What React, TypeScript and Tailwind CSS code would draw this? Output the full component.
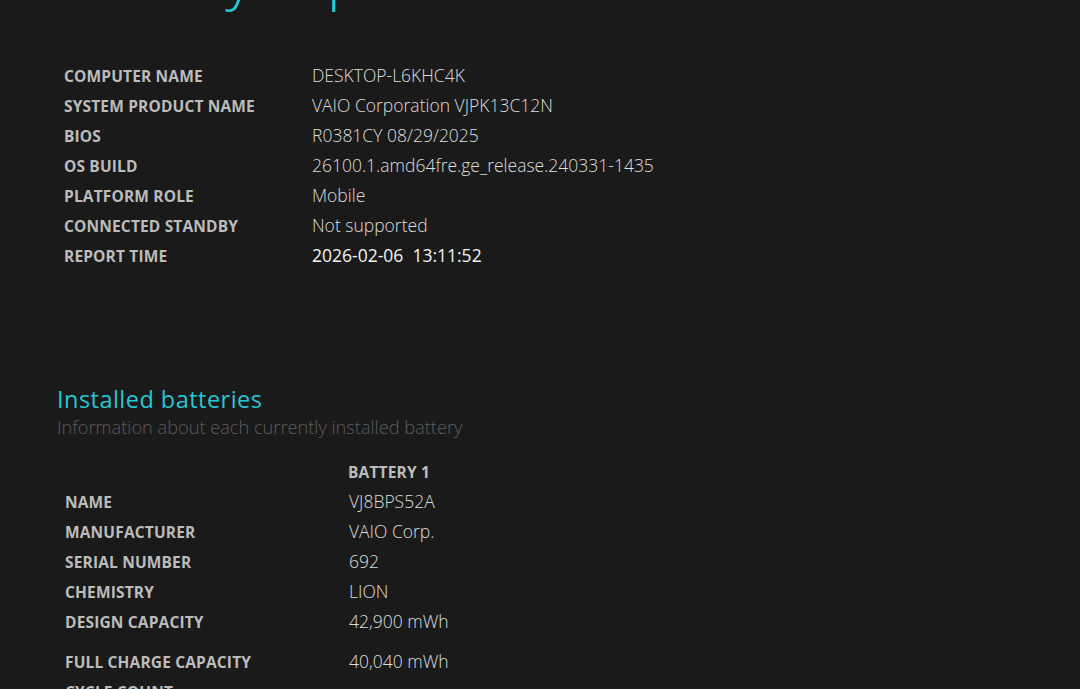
import React from 'react'

const systemInfo: [string, string][] = [
  ['Computer name', 'DESKTOP-L6KHC4K'],
  ['System product name', 'VAIO Corporation VJPK13C12N'],
  ['BIOS', 'R0381CY 08/29/2025'],
  ['OS build', '26100.1.amd64fre.ge_release.240331-1435'],
  ['Platform role', 'Mobile'],
  ['Connected standby', 'Not supported'],
]

const batteryInfo: [string, string][] = [
  ['Name', 'VJ8BPS52A'],
  ['Manufacturer', 'VAIO Corp.'],
  ['Serial number', '692'],
  ['Chemistry', 'LION'],
  ['Design capacity', '42,900 mWh'],
]

const font = { fontFamily: '"Open Sans", "Noto Sans", sans-serif' }

const Label = ({ children }: { children: React.ReactNode }) => (
  <div className="mt-[3px] whitespace-nowrap text-[15.5px] font-bold uppercase tracking-[0.01em] text-[#bcbcbc]">
    {children}
  </div>
)

const Value = ({
  children,
  strong,
}: {
  children: React.ReactNode
  strong?: boolean
}) => (
  <div
    className={
      strong
        ? 'whitespace-nowrap text-[17.5px] font-medium text-[#f2f2f2]'
        : 'whitespace-nowrap text-[17.5px] font-light text-[#dedede]'
    }
  >
    {children}
  </div>
)

const App = () => {
  return (
    <div
      className="h-[689px] w-[1080px] overflow-hidden bg-[#1a1a1a] pl-[57px]"
      style={font}
    >
      <h1 className="-mt-[55px] h-[60px] text-[61px] font-light leading-[60px] text-[#22c9d8]">
        Battery report
      </h1>

      <div className="ml-[7px] mt-[55px] flex flex-col">
        {systemInfo.map(([label, value]) => (
          <div key={label} className="flex h-[30px] items-center">
            <div className="w-[248px]">
              <Label>{label}</Label>
            </div>
            <Value>{value}</Value>
          </div>
        ))}
        <div className="flex h-[30px] items-center">
          <div className="w-[248px]">
            <Label>Report time</Label>
          </div>
          <Value strong>
            2026-02-06&nbsp;&nbsp;13:11:52
          </Value>
        </div>
      </div>

      <h2 className="mt-[115px] text-[23.5px] font-medium leading-[28px] tracking-[0.02em] text-[#27c6d3]">
        Installed batteries
      </h2>
      <p className="text-[18.2px] font-light leading-[28px] text-[#5c5c5c]">
        Information about each currently installed battery
      </p>

      <div className="ml-[8px] mt-[15px] flex flex-col">
        <div className="flex h-[30px] items-center">
          <div className="w-[283px]" />
          <Label>Battery 1</Label>
        </div>
        {batteryInfo.map(([label, value]) => (
          <div key={label} className="flex h-[30px] items-center">
            <div className="w-[284px]">
              <Label>{label}</Label>
            </div>
            <Value>{value}</Value>
          </div>
        ))}
        <div className="mt-[10px] flex h-[30px] items-center">
          <div className="w-[284px]">
            <Label>Full charge capacity</Label>
          </div>
          <Value>40,040 mWh</Value>
        </div>
        <div className="flex h-[30px] items-center">
          <div className="w-[284px]">
            <Label>Cycle count</Label>
          </div>
        </div>
      </div>
    </div>
  )
}

export default App
